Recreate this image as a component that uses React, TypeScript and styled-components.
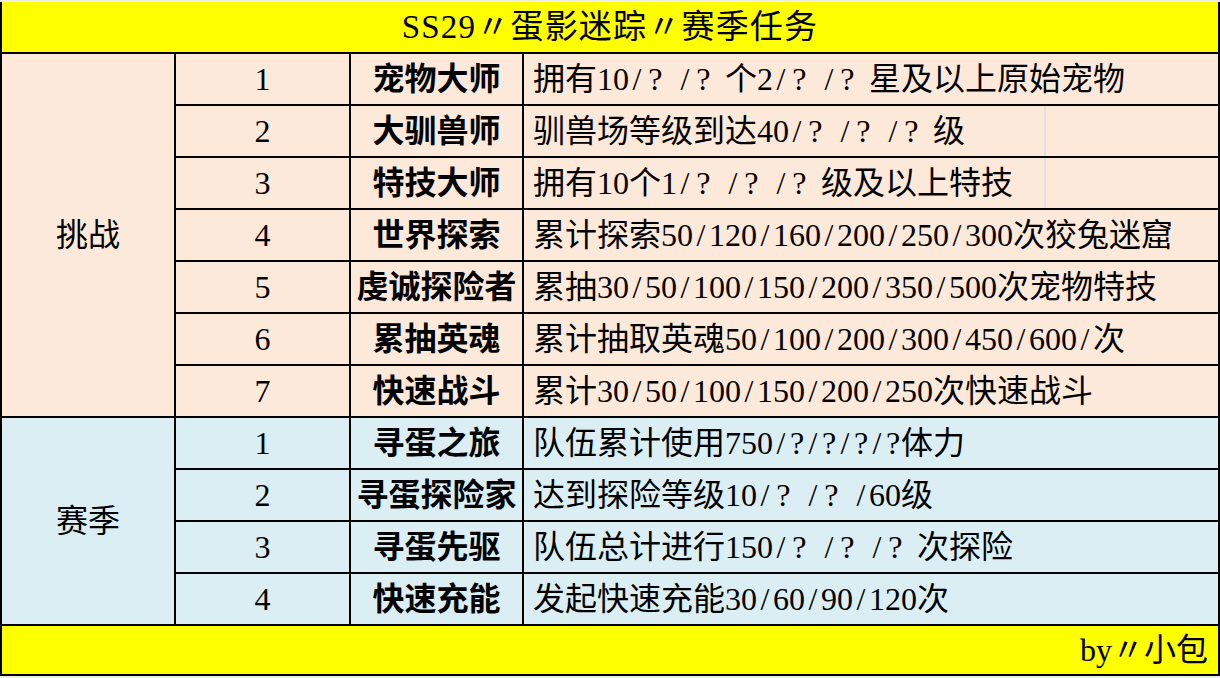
import React from 'react';
import styled, { createGlobalStyle } from 'styled-components';

const GlobalStyle = createGlobalStyle`
  html, body {
    margin: 0;
    padding: 0;
    background: #ececec;
  }
  body {
    font-family: "Liberation Serif", "Noto Sans CJK SC", serif;
    color: #000;
  }
`;

type Task = { no: string; name: string; text: string; grid?: boolean };

const challenge: Task[] = [
  { no: '1', name: '宠物大师', text: '拥有10/？/？个2/？/？星及以上原始宠物' },
  { no: '2', name: '大驯兽师', text: '驯兽场等级到达40/？/？/？级', grid: true },
  { no: '3', name: '特技大师', text: '拥有10个1/？/？/？级及以上特技', grid: true },
  { no: '4', name: '世界探索', text: '累计探索50/120/160/200/250/300次狡兔迷窟' },
  { no: '5', name: '虔诚探险者', text: '累抽30/50/100/150/200/350/500次宠物特技' },
  { no: '6', name: '累抽英魂', text: '累计抽取英魂50/100/200/300/450/600/次' },
  { no: '7', name: '快速战斗', text: '累计30/50/100/150/200/250次快速战斗' },
];

const season: Task[] = [
  { no: '1', name: '寻蛋之旅', text: '队伍累计使用750/?/?/?/?体力' },
  { no: '2', name: '寻蛋探险家', text: '达到探险等级10/？/？/60级' },
  { no: '3', name: '寻蛋先驱', text: '队伍总计进行150/？/？/？次探险' },
  { no: '4', name: '快速充能', text: '发起快速充能30/60/90/120次' },
];

const Page = styled.div`
  padding-top: 2px;
  width: 1220px;
`;

const Sheet = styled.div`
  display: grid;
  grid-template-columns: 172px 173px 171px 694px;
  grid-template-rows: 50px repeat(11, 50px) 48px;
  gap: 2px;
  padding: 0 2px 2px 2px;
  background: #000;
  font-size: 32px;
  line-height: 1;
`;

const Banner = styled.div<{ $align?: 'center' | 'right' }>`
  grid-column: 1 / -1;
  background: #ffff00;
  display: flex;
  align-items: center;
  justify-content: ${p => (p.$align === 'right' ? 'flex-end' : 'center')};
  padding: 0 10px;
  font-size: ${p => (p.$align === 'right' ? '32px' : '33px')};
  letter-spacing: ${p => (p.$align === 'right' ? '0' : '1.2px')};
`;

const Cell = styled.div<{ $tone: 'peach' | 'blue'; $grid?: boolean }>`
  background: ${p => (p.$tone === 'peach' ? '#fde9d9' : '#daeef3')};
  display: flex;
  align-items: center;
  white-space: nowrap;
  ${p =>
    p.$grid &&
    `background-image: linear-gradient(to right, transparent 520px, #e4e1e1 520px, #e4e1e1 522px, transparent 522px);`}
`;

const Group = styled(Cell)<{ $rows: number }>`
  grid-column: 1;
  grid-row: span ${p => p.$rows};
  justify-content: center;
`;

const Num = styled(Cell)`
  justify-content: center;
`;

const Name = styled(Cell)`
  justify-content: center;
  font-weight: 700;
`;

const Desc = styled(Cell)`
  padding-left: 9px;
`;

const Half = styled.span<{ $full?: boolean }>`
  display: inline-block;
  width: ${p => (p.$full ? '1em' : '0.5em')};
  text-align: ${p => (p.$full ? 'left' : 'center')};
  padding-left: ${p => (p.$full ? '0.1em' : '0')};
  box-sizing: border-box;
`;

// 宋体 style: slashes and question marks take half a character, ？ a full one
function Text({ value }: { value: string }) {
  const parts: React.ReactNode[] = [];
  let buf = '';
  const flush = () => {
    if (buf) parts.push(buf);
    buf = '';
  };
  [...value].forEach((ch, i) => {
    if (ch === '/' || ch === '?') {
      flush();
      parts.push(<Half key={i}>{ch}</Half>);
    } else if (ch === '？') {
      flush();
      parts.push(<Half key={i} $full>?</Half>);
    } else {
      buf += ch;
    }
  });
  flush();
  return <>{parts}</>;
}

function Section({ label, tasks, tone }: { label: string; tasks: Task[]; tone: 'peach' | 'blue' }) {
  return (
    <>
      {tasks.map((t, i) => (
        <React.Fragment key={t.no}>
          {i === 0 && (
            <Group $tone={tone} $rows={tasks.length}>
              {label}
            </Group>
          )}
          <Num $tone={tone}>{t.no}</Num>
          <Name $tone={tone}>{t.name}</Name>
          <Desc $tone={tone} $grid={t.grid}>
            <Text value={t.text} />
          </Desc>
        </React.Fragment>
      ))}
    </>
  );
}

export default function App() {
  return (
    <Page>
      <GlobalStyle />
      <Sheet>
        <Banner>SS29〃蛋影迷踪〃赛季任务</Banner>
        <Section label="挑战" tasks={challenge} tone="peach" />
        <Section label="赛季" tasks={season} tone="blue" />
        <Banner $align="right">by〃小包</Banner>
      </Sheet>
    </Page>
  );
}
